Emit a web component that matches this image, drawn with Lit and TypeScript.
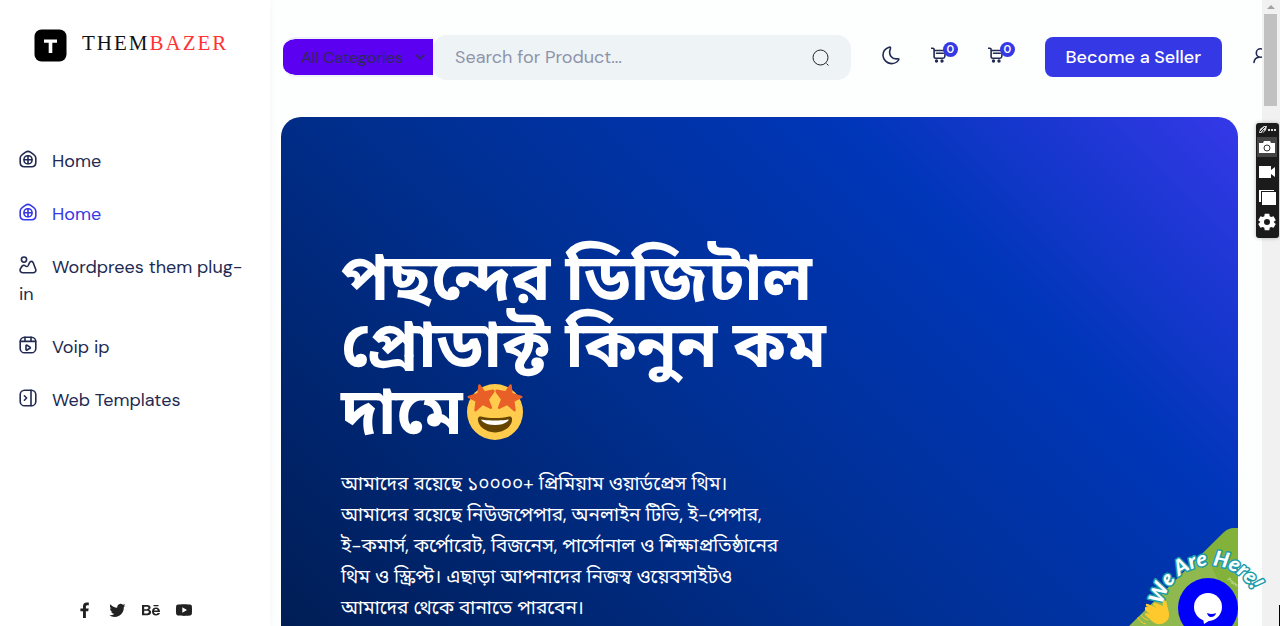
import { LitElement, html, css, svg, TemplateResult } from "lit";
import { customElement } from "lit/decorators.js";

const homeIcon = svg`<path d="M6.600 2.200 3.200 4.600C2 5.500 1.200 6.300 1.200 8v4.600c0 2.700 1.500 4.200 4.200 4.200h7.200c2.700 0 4.200-1.500 4.200-4.200V8c0-1.700-.8-2.500-2-3.400l-3.400-2.400c-1.800-1.300-3-1.300-4.800 0Z"/><rect x="5" y="5.800" width="8" height="8" rx="3.600"/><path d="M9 6v7.600M5.200 9.800h7.600"/>`;
const artIcon = svg`<circle cx="5" cy="3.600" r="2.600"/><path d="M1.200 13.200c-.6 2 .8 3.600 2.800 3.600h10c2.200 0 3.400-1.800 2.600-3.800l-2.300-6C13.500 4.900 11.400 4.900 10.400 6.900L9.200 9.500c-.6 1.200-1.800 1.300-2.700.5C5.300 8.900 3.600 9.200 2.800 10.500Z"/>`;
const reelIcon = svg`<rect x="1.200" y="1.200" width="15.600" height="15.600" rx="4.400"/><path d="M1.400 5.400h15.200M6 1.400v4M12 1.400v4M7 9.600v3.800c0 .6.500.9 1 .6l3-1.700c.5-.3.500-.9 0-1.200L8 9.200c-.5-.3-1 0-1 .4Z"/>`;
const panelIcon = svg`<rect x="1.200" y="1.200" width="15.600" height="15.600" rx="4.400"/><path d="M12 1.400v15.200M5.400 6.800 7.600 9l-2.200 2.200"/>`;

interface NavItem {
  label: string;
  icon: TemplateResult<2>;
  active?: boolean;
}

const navItems: NavItem[] = [
  { label: "Home", icon: homeIcon },
  { label: "Home", icon: homeIcon, active: true },
  { label: "Wordprees them plug-in", icon: artIcon },
  { label: "Voip ip", icon: reelIcon },
  { label: "Web Templates", icon: panelIcon },
];

const socials = [
  { label: "Facebook", icon: svg`<path d="M9.900 9.200h2.300l.5-2.800H9.900V4.700c0-.9.4-1.500 1.600-1.500h1.300V.6C12.400.5 11.600.4 10.700.4 8.400.4 7 1.800 7 4.300v2.100H4.400v2.800H7V16h2.900Z"/>` },
  { label: "Twitter", icon: svg`<path d="M16.500 3.200c-.6.300-1.200.5-1.900.6.700-.4 1.200-1 1.400-1.800-.6.400-1.300.6-2.100.8A3.300 3.300 0 0 0 8.300 5.800C5.500 5.700 3.100 4.300 1.500 2.300a3.300 3.300 0 0 0 1 4.400c-.5 0-1-.2-1.500-.4 0 1.600 1.100 3 2.600 3.300-.5.100-1 .1-1.500 0 .4 1.300 1.600 2.300 3.100 2.300A6.600 6.600 0 0 1 .3 13.300a9.300 9.300 0 0 0 14.500-8.300c.7-.5 1.200-1.100 1.700-1.800Z"/>` },
  { label: "Behance", icon: svg`<path fill-rule="evenodd" d="M0 3h5.200c2.200 0 3.400.9 3.400 2.600 0 1-.5 1.700-1.400 2.200 1.200.4 1.900 1.300 1.900 2.500 0 2-1.500 3-3.700 3H0Zm2.200 1.800v2.400h2.600c1 0 1.600-.4 1.600-1.200S5.800 4.800 4.800 4.800Zm0 4v2.700H5c1.200 0 1.800-.5 1.800-1.400S6.200 8.800 5 8.800ZM11.500 3h5v1.200h-5ZM14 5.500c2.500 0 4 1.600 4 4.600h-6c.1 1.200.8 1.800 2 1.800.8 0 1.400-.3 1.600-.9H18c-.5 1.600-1.800 2.500-4 2.500-2.500 0-4-1.500-4-4s1.600-4 4-4Zm0 1.500c-1.100 0-1.700.6-1.900 1.600h3.700C15.700 7.600 15.100 7 14 7Z"/>` },
  { label: "YouTube", icon: svg`<path fill-rule="evenodd" d="M3 2.500C9 2 9 2 15 2.500c1.200.1 1.800.9 1.900 2 .2 2.300.2 4.700 0 7-.1 1.100-.7 1.900-1.900 2-6 .5-6 .5-12 0-1.200-.1-1.800-.9-1.900-2-.2-2.300-.2-4.700 0-7 .1-1.100.7-1.900 1.900-2ZM7.300 5.200v5.600L12 8Z"/>` },
];

const cart = svg`<path d="M.6 1.200h1.200c.8 0 1.300.5 1.300 1.300v7c0 1.100.6 1.700 1.700 1.700h7.200c1.100 0 1.700-.6 1.800-1.700l.5-6H3.300M5.500 6.300h6.800"/><circle cx="5.500" cy="14" r=".9"/><circle cx="11" cy="14" r=".9"/>`;

@customElement("app-root")
export class AppRoot extends LitElement {
  static styles = css`
    :host {
      display: grid;
      grid-template-columns: 270px minmax(0, 1fr) 18px;
      height: 100vh;
      overflow: hidden;
      position: relative;
      background: #fdfefe;
      font-family: "DM Sans", Inter, "Noto Sans Bengali", sans-serif;
      font-size: 18px;
      color: #222a52;
    }
    * { box-sizing: border-box; }
    a { color: inherit; text-decoration: none; }
    button, select, input { font: inherit; color: inherit; border: 0; margin: 0; padding: 0; background: none; }
    svg { display: block; }
    .line { fill: none; stroke: currentColor; stroke-width: 1.600; stroke-linecap: round; stroke-linejoin: round; }

    .sidebar {
      display: flex;
      flex-direction: column;
      background: #fff;
      box-shadow: 0 0 8px #0000000a;
      min-height: 0;
    }
    .brand { display: flex; align-items: center; gap: 15px; padding: 28px 34px 0; }
    .wordmark { font: 21px/30px "Liberation Serif", serif; letter-spacing: 2px; color: #111; padding-bottom: 4px; }
    .red { color: #f33; }
    .menu { list-style: none; margin: 0; padding: 86px 19px 0; display: grid; gap: 26px; line-height: 27px; }
    .glyph { display: inline-block; vertical-align: -1px; margin-right: 15px; }
    .active { color: #3538e5; }
    .social { display: flex; gap: 15px; margin-top: auto; padding: 0 76px 7px; color: #222; }
    .social svg { fill: currentColor; }

    .main { display: flex; flex-direction: column; min-width: 0; overflow: hidden; }
    .topbar { display: flex; align-items: flex-start; padding: 35px 0 37px 13px; }
    .search { display: flex; align-items: flex-start; flex: 0 0 58%; min-width: 0; }
    .category { position: relative; flex: none; margin-top: 2px; color: #2f2a55; }
    .category select {
      display: block;
      appearance: none;
      width: 150px;
      height: 40px;
      padding-left: 18px;
      background: #5b00f0 padding-box;
      border: solid #eef2f6;
      border-width: 2px 0;
      border-radius: 12px 0 0 12px;
      font-size: 16px;
    }
    .category svg { position: absolute; right: 7px; top: 14px; pointer-events: none; }
    .field { display: flex; flex: 1; min-width: 0; align-items: center; height: 45px; border-radius: 14px; background: #eef3f6; padding: 0 20px 1px 22px; color: #222; }
    .field input { flex: 1; min-width: 0; outline: 0; }
    .field input::placeholder { color: #8f93aa; opacity: 1; }
    .tools { display: flex; flex: none; align-items: flex-start; padding-left: 31px; }
    .moon { margin: 11px 31px 0 0; }
    .cart { position: relative; width: 27px; margin: 12px 30px 0 0; flex: none; }
    .badge {
      position: absolute; left: 12px; top: -5px; width: 15px; height: 15px; border-radius: 50%;
      background: #3538e5; color: #fff; font-size: 11px; line-height: 15px; text-align: center; font-weight: 600;
    }
    .seller { height: 40px; width: 177px; margin: 2px 31px 0 0; border-radius: 8px; background: #3538e5; color: #fff; text-align: center; line-height: 40px; font-weight: 500; flex: none; white-space: nowrap; }
    .user { margin-top: 12px; flex: none; }

    .hero {
      position: relative;
      flex: 0 0 620px;
      margin: 0 24px 0 11px;
      padding: 128px 60px 0;
      border-radius: 20px;
      overflow: hidden;
      color: #fff;
      background: linear-gradient(45deg, #001a4a 0%, #002f90 45%, #0036b9 75%, #3538e8 100%);
    }
    .title { margin: 0; font-size: 65px; line-height: 67px; font-weight: 700; white-space: nowrap; }
    .face { display: inline-block; vertical-align: -6px; margin-left: 4px; }
    .copy { margin: 22px 0 0; font-size: 19px; line-height: 31px; white-space: nowrap; }
    .offer { position: absolute; right: 0; top: 411px; }
    .offer text { font-size: 5px; fill: #dfedc5; }

    .track { background: #f1f1f1; position: relative; display: grid; grid-template-rows: 14px 92px; justify-items: center; align-items: center; }
    .track svg { fill: #a3a3a3; }
    .thumb { width: 13px; height: 92px; margin-right: 2px; background: #c1c1c1; }

    .recorder {
      position: absolute; right: 1px; top: 123px; width: 23px; height: 115px; border-radius: 3px; background: #1b1b1b; padding: 2px 2px 0 0;
      display: grid; grid-template-rows: 9px repeat(4, 25px); justify-items: center; align-items: center; color: #fff; box-shadow: 0 0 4px #0004;
    }
    .recorder button { display: grid; place-items: center; width: 20px; height: 20px; color: #fff; }
    .recorder .on { background: #444; }
    .chat { position: absolute; right: 0; bottom: 0; width: 150px; height: 96px; overflow: hidden; }
    .wave { font: italic 900 21px Lato, sans-serif; fill: #fff; stroke: #1d9baa; stroke-width: 3px; paint-order: stroke; stroke-linejoin: round; text-anchor: middle; }
  `;

  render() {
    return html`
      <aside class="sidebar">
        <a class="brand" href="#" aria-label="Thembazer">
          <svg width="33" height="33"><rect x=".5" y=".5" width="32" height="32" rx="7" /><path fill="#fff" d="M10 10.500h13v3.300h-4.700V24h-3.600V13.800H10Z" /></svg>
          <span class="wordmark">THEM<span class="red">BAZER</span></span>
        </a>
        <nav>
          <ul class="menu">
            ${navItems.map((i) => html`<li><a href="#" class=${i.active ? "active" : ""}><svg class="glyph line" width="18" height="18" aria-hidden="true">${i.icon}</svg>${i.label}</a></li>`)}
          </ul>
        </nav>
        <div class="social">
          ${socials.map((s) => html`<a href="#" aria-label=${s.label}><svg width="18" height="17" aria-hidden="true">${s.icon}</svg></a>`)}
        </div>
      </aside>

      <main class="main">
        <header class="topbar">
          <form class="search">
            <div class="category">
              <select aria-label="Category"><option>All Categories</option></select>
              <svg class="line" width="12" height="12"><path d="m2 4 4 4 4-4" /></svg>
            </div>
            <div class="field">
              <input type="text" aria-label="Search" placeholder="Search for Product..." />
              <button type="button" aria-label="Search"><svg width="20" height="20" fill="none" stroke="currentColor"><circle cx="9.500" cy="10.500" r="7.500" /><path d="m15.500 16.500 2 2" /></svg></button>
            </div>
          </form>
          <div class="tools">
            <button class="moon" aria-label="Dark mode"><svg class="line" width="18" height="19"><path d="M1 9.800c.3 4.200 3.900 7.600 8.200 7.800 3 .1 5.700-1.300 7.300-3.500.7-.9.300-1.500-.8-1.300-5.700.9-9.500-4.100-7.500-9.400C8.900 1.700 8.400.7 7 1.300 3.200 2.700.8 5.900 1 9.800Z" /></svg></button>
            <a class="cart" href="#" aria-label="Wishlist"><svg class="line" width="17" height="18">${cart}</svg><span class="badge">0</span></a>
            <a class="cart" href="#" aria-label="Cart"><svg class="line" width="17" height="18">${cart}</svg><span class="badge">0</span></a>
            <a class="seller" href="#">Become a Seller</a>
            <a class="user" href="#" aria-label="Account"><svg class="line" width="17" height="18"><circle cx="7.500" cy="6" r="4.200" /><path d="M1 15.500c.3-3.300 2.300-5 5-5.300" /></svg></a>
          </div>
        </header>

        <section class="hero">
          <svg class="offer" width="122" height="160" viewBox="0 0 122 160" aria-hidden="true">
            <path fill="#83b23b" d="M122 0h-4q-6 0-11 5L0 111v49h122Z" />
            <path fill="#99bd60" opacity=".55" d="m88 25 22 42-30 70H0v-26Z" />
            <text transform="translate(111 52) rotate(38)">Prem</text>
          </svg>
          <h1 class="title">পছন্দের ডিজিটাল<br />প্রোডাক্ট কিনুন কম<br />দামে<svg class="face" width="56" height="56" viewBox="0 0 36 36" role="img" aria-label="🤩">
              <circle fill="#FFCC4D" cx="18" cy="18" r="18" />
              <path fill="#664500" d="M18 21.900c-3.600 0-6-.4-9-1-.7-.1-2 0-2 2 0 4 4.600 8.200 11 8.200s11-4.200 11-8.200c0-2-1.300-2.100-2-2-3 .6-5.400 1-9 1Z" />
              <path fill="#fff" d="M9 22.800s3 .6 9 .6 9-.6 9-.6-1.600 3.600-9 3.600-9-3.600-9-3.600Z" />
              <path fill="#E95F28" d="M16.700 3.600 11.400 4.500 8.600.5c-.5-.7-1.300-.3-1.400.4L6.700 5.800 1 7.500c-1 .3-.9 1.100-.2 1.500L5.400 11.300l-.7 5.400c-.1.900.7 1.300 1.400.7l4.100-3.700 4.700 2.200c.8.4 1.500-.2 1.200-1l-1.900-5 3.300-4.500c.5-.8.1-1.900-.8-1.800Z" />
              <path fill="#E95F28" d="m19.300 3.600 5.300.9 2.800-4c.5-.7 1.300-.3 1.400.4l.5 4.900L35 7.500c1 .3.900 1.100.2 1.500l-4.600 2.300.7 5.400c.1.900-.7 1.300-1.400.7l-4.100-3.700-4.700 2.200c-.8.4-1.500-.2-1.200-1l1.900-5-3.300-4.500c-.5-.8-.1-1.900.8-1.800Z" />
            </svg></h1>
          <p class="copy">আমাদের রয়েছে ১০০০০+ প্রিমিয়াম ওয়ার্ডপ্রেস থিম।<br />আমাদের রয়েছে নিউজপেপার, অনলাইন টিভি, ই-পেপার,<br />ই-কমার্স, কর্পোরেট, বিজনেস, পার্সোনাল ও শিক্ষাপ্রতিষ্ঠানের<br />থিম ও স্ক্রিপ্ট। এছাড়া আপনাদের নিজস্ব ওয়েবসাইটও<br />আমাদের থেকে বানাতে পারবেন।</p>
        </section>
      </main>

      <div class="track" aria-hidden="true"><svg width="8" height="4"><path d="m4 0 4 4H0Z" /></svg><div class="thumb"></div></div>

      <div class="recorder">
        <svg width="18" height="9" fill="#ddd"><path d="M1 8 2 4l4-3h3L8 5 5 8Z" /><path stroke="#1b1b1b" d="m2 7 5-5M4 8l2-3" /><path d="M10 4h2v2h-2Zm3 0h2v2h-2Zm3 0h2v2h-2Z" /></svg>
        <button class="on" aria-label="Screenshot"><svg width="18" height="14" fill="currentColor"><path d="M1 3h4l1-2h6l1 2h4v10H1Z" /><circle cx="9" cy="8" r="3" stroke="#333" /></svg></button>
        <button aria-label="Record"><svg width="18" height="14" fill="currentColor"><path d="M1 1h12v4l4-3v10l-4-3v4H1Z" /></svg></button>
        <button aria-label="Gallery"><svg width="18" height="16" fill="currentColor"><path d="M1 1h15v1H3v11H1Z" /><path d="M4 3h14v13H4Z" /></svg></button>
        <button aria-label="Settings"><svg width="18" height="18" viewBox="0 0 24 24" fill="currentColor"><path fill-rule="evenodd" d="m9 1-.6 3.300-2 1.100-3.100-1.100-3 5.200L2.900 11.700v.6L.3 14.500l3 5.200 3.100-1.100 2 1.100L9 23h6l.6-3.300 2-1.100 3.100 1.100 3-5.200-2.600-2.200v-.6l2.600-2.200-3-5.200-3.100 1.100-2-1.100L15 1Zm3 7a4 4 0 1 1 0 8 4 4 0 0 1 0-8Z" /></svg></button>
      </div>

      <div class="chat">
        <svg width="150" height="96" viewBox="1130 530 150 96" role="img" aria-label="We Are Here! Open chat">
          <defs><path id="arc" d="M1162 616A48 48 0 0 1 1256 600" /></defs>
          <path d="M1279 605h1v21h-1Z" />
          <circle cx="1208" cy="608" r="30" fill="#0000fb" />
          <circle cx="1208" cy="607" r="14" fill="#fff" />
          <path fill="#fff" d="m1203 618 1 6 8-5Z" />
          <path fill="#0000fb" d="M1207 613q5 2 9 0-1 4-5 4-3 0-4-4Z" />
          <text class="wave"><textPath href="#arc" startOffset="50%">We Are Here!</textPath></text>
          <path fill="#fdc92d" d="M1145 608q0-2 3-1l7 3-9-4q-1-3 2-2l9 4-4-3q0-3 3-2l7 3q-1-5 1-6 3 1 3 5l2 8q1 7-5 10-6 3-11-1l-8-7q-1-2 2-2l3 1-5-4Z" />
          <path fill="none" stroke="#fdc92d" d="M1138 617q2 6 8 7M1141 615q2 4 7 5" />
        </svg>
      </div>
    `;
  }
}
